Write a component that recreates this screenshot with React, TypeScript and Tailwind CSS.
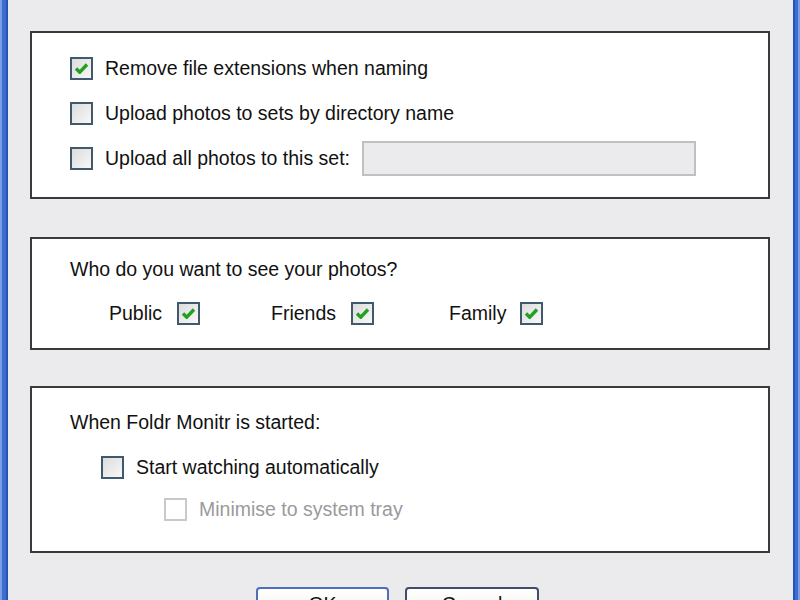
import React from "react";

function Box({ checked = false, disabled = false }: { checked?: boolean; disabled?: boolean }) {
  return (
    <div
      className={
        disabled
          ? "w-[23px] h-[23px] shrink-0 border-2 border-[#c9c9cc] bg-white"
          : "w-[23px] h-[23px] shrink-0 border-2 border-[#3f5a6e] bg-gradient-to-br from-[#dcdcdc] to-[#f8f8f8] flex items-center justify-center"
      }
    >
      {checked && !disabled && (
        <svg width="15" height="13" viewBox="0 0 15 13">
          <path d="M2 6.5 L5.8 10.2 L13 2.5" fill="none" stroke="#22a022" strokeWidth="3.4" strokeLinejoin="round" />
        </svg>
      )}
    </div>
  );
}

export default function App() {
  const font = { fontFamily: '"Liberation Sans", Arial, sans-serif' };
  return (
    <div className="w-[800px] h-[600px] overflow-hidden flex bg-[#ebeaec] text-[#111] text-[19.5px] whitespace-nowrap" style={font}>
      <div className="w-[8px] h-full flex shrink-0">
        <div className="w-[2px] bg-[#7c9ee0]" />
        <div className="w-[4px] bg-[#3d6dd0]" />
        <div className="w-[2px] bg-[#2653b6]" />
      </div>
      <div className="flex-1 flex flex-col pt-[31px] pl-[22px] pr-[23px]">
        <div className="h-[168px] shrink-0 border-2 border-[#3a3a3a] bg-white pt-[24px] pl-[38px] flex flex-col gap-[22px]">
          <div className="h-[23px] flex items-center gap-[12px]">
            <Box checked />
            <span className="leading-none">Remove file extensions when naming</span>
          </div>
          <div className="h-[23px] flex items-center gap-[12px]">
            <Box />
            <span className="leading-none">Upload photos to sets by directory name</span>
          </div>
          <div className="h-[23px] flex items-center">
            <Box />
            <span className="leading-none ml-[12px] w-[257px] shrink-0">Upload all photos to this set:</span>
            <div className="w-[334px] h-[35px] shrink-0 border-2 border-[#c0c0c2] bg-[#ebeaec]" />
          </div>
        </div>
        <div className="h-[113px] shrink-0 mt-[38px] border-2 border-[#3a3a3a] bg-white pt-[19px] pl-[38px] flex flex-col gap-[20px]">
          <div className="h-[24px] flex items-center leading-none">Who do you want to see your photos?</div>
          <div className="h-[23px] flex items-center pl-[39px]">
            <div className="w-[162px] shrink-0 flex items-center gap-[15px]">
              <span className="leading-none">Public</span>
              <Box checked />
            </div>
            <div className="w-[178px] shrink-0 flex items-center gap-[15px]">
              <span className="leading-none">Friends</span>
              <Box checked />
            </div>
            <div className="flex items-center gap-[14px]">
              <span className="leading-none">Family</span>
              <Box checked />
            </div>
          </div>
        </div>
        <div className="h-[167px] shrink-0 mt-[36px] border-2 border-[#3a3a3a] bg-white pt-[23px] pl-[38px] flex flex-col">
          <div className="h-[24px] flex items-center leading-none">When Foldr Monitr is started:</div>
          <div className="h-[23px] mt-[21px] flex items-center gap-[12px] pl-[31px]">
            <Box />
            <span className="leading-none">Start watching automatically</span>
          </div>
          <div className="h-[23px] mt-[19px] flex items-center gap-[12px] pl-[94px] text-[#9a9a9c]">
            <Box disabled />
            <span className="leading-none">Minimise to system tray</span>
          </div>
        </div>
        <div className="mt-[34px] shrink-0 flex gap-[16px] pl-[226px]">
          <button className="w-[133px] h-[41px] shrink-0 rounded-[4px] border-2 border-[#4d6fb8] bg-gradient-to-b from-white to-[#ecebe6] flex justify-center pt-[6px] leading-none">
            OK
          </button>
          <button className="w-[134px] h-[41px] shrink-0 rounded-[4px] border-2 border-[#3f4d6a] bg-gradient-to-b from-white to-[#ecebe6] flex justify-center pt-[6px] leading-none">
            Cancel
          </button>
        </div>
      </div>
      <div className="w-[7px] h-full flex shrink-0">
        <div className="w-[2px] bg-[#2653b6]" />
        <div className="w-[3px] bg-[#3d6dd0]" />
        <div className="w-[2px] bg-[#7c9ee0]" />
      </div>
    </div>
  );
}
